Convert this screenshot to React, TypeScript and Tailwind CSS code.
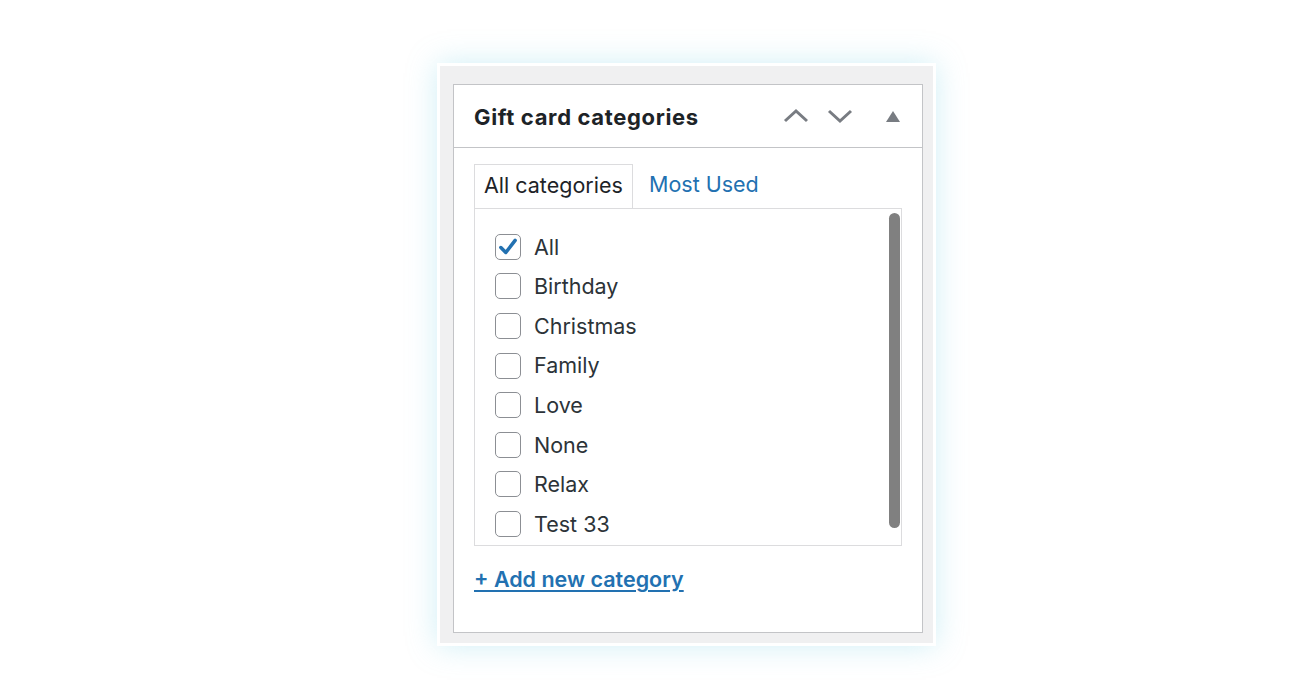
const categories = ['All', 'Birthday', 'Christmas', 'Family', 'Love', 'None', 'Relax', 'Test 33'];

function Checkbox({ checked }: { checked: boolean }) {
  return (
    <span className="flex h-[26px] w-[26px] shrink-0 items-center justify-center rounded-[5px] border-[1.5px] border-[#8c8f94] bg-white">
      {checked && (
        <svg width="22" height="22" viewBox="0 0 20 20">
          <path d="M3.5 10.5 L8 15 L16.5 4" fill="none" stroke="#2271b1" strokeWidth="3.2" strokeLinecap="round" strokeLinejoin="round" />
        </svg>
      )}
    </span>
  );
}

export default function App() {
  return (
    <div
      className="h-[700px] w-[1300px] bg-white pl-[437px] pt-[63px]"
      style={{ fontFamily: 'Inter, "Noto Sans", sans-serif' }}
    >
      <div className="h-[583px] w-[499px] border-[3px] border-white bg-[#f0f0f1] pb-[10px] pl-[13px] pr-[10px] pt-[18px] shadow-[0_0_28px_rgba(120,210,230,0.35)]">
        <div className="flex h-full flex-col border border-[#c3c4c7] bg-white">
          {/* header */}
          <div className="flex h-[63px] items-center border-b border-[#c3c4c7] pl-[20px] pr-[22px]">
            <h2 className="relative top-[1px] flex-1 text-[22px] font-bold tracking-[0.65px] text-[#1d2327]">Gift card categories</h2>
            <div className="flex items-center text-[#787c82]">
              <svg width="26" height="16" viewBox="0 0 26 16" className="mr-[18px]">
                <path d="M2 13 L13 3 L24 13" fill="none" stroke="currentColor" strokeWidth="3" />
              </svg>
              <svg width="26" height="16" viewBox="0 0 26 16" className="mr-[33px]">
                <path d="M2 3 L13 13 L24 3" fill="none" stroke="currentColor" strokeWidth="3" />
              </svg>
              <svg width="14" height="11" viewBox="0 0 14 11">
                <path d="M7 0 L14 11 L0 11 Z" fill="currentColor" />
              </svg>
            </div>
          </div>

          {/* body */}
          <div className="pl-[20px] pr-[20px] pt-[15px]">
            <div className="flex items-end">
              <div className="relative top-px flex h-[45px] w-[159px] items-center border border-b-0 border-[#dcdcde] bg-white pb-[4px] pl-[9px] text-[21.5px] text-[#1d2327]">
                All categories
              </div>
              <a className="flex h-[44px] items-center pb-[4px] pl-[16px] text-[21.5px] text-[#2271b1]">Most Used</a>
            </div>
            <div className="relative h-[338px] border border-[#dcdcde] pl-[20px] pt-[18px]">
              <ul className="flex flex-col">
                {categories.map((c, i) => (
                  <li key={c} className="flex h-[39.6px] items-center gap-[13px] text-[21.5px] text-[#2c3338]">
                    <Checkbox checked={i === 0} />
                    <span>{c}</span>
                  </li>
                ))}
              </ul>
              <div className="absolute right-[1px] top-[4px] h-[315px] w-[11px] rounded-full bg-[#808080]" />
            </div>
            <a className="mt-[17px] block text-[21.5px] font-semibold text-[#2271b1] underline underline-offset-[3px]">
              + Add new category
            </a>
          </div>
        </div>
      </div>
    </div>
  );
}
